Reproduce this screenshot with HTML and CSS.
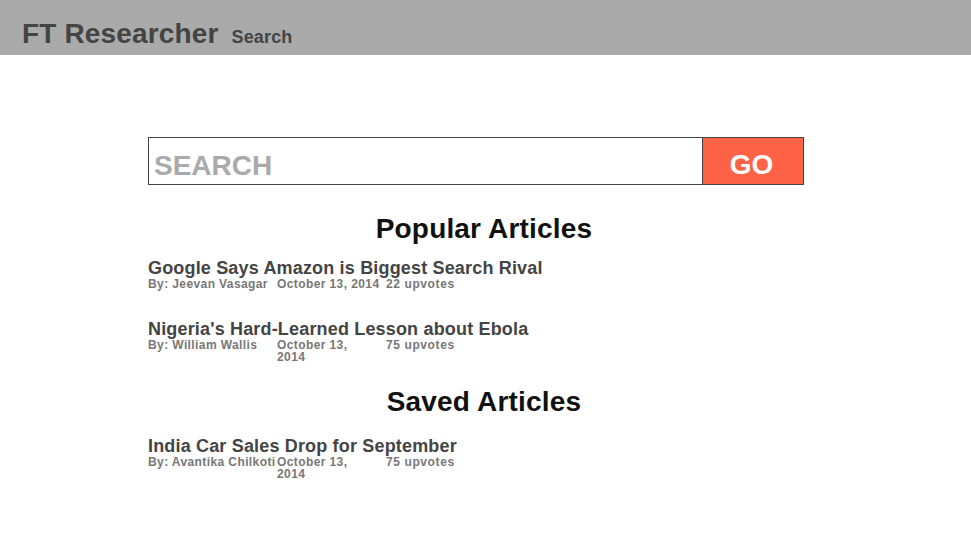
FILE: index.html
```html
<!DOCTYPE html>
<html>
<head>
<meta charset="utf-8">
<title>FT Researcher</title>
<link rel="stylesheet" href="styles.css">
</head>
<body>
<header class="topbar">
  <span class="brand">FT Researcher</span>
  <span class="nav">Search</span>
</header>
<main class="container">
  <form class="search">
    <input class="search-input" type="text" placeholder="SEARCH">
    <button class="search-btn" type="button">GO</button>
  </form>
  <h2 class="section-title popular">Popular Articles</h2>
  <section class="articles">
    <div class="article">
      <div class="title">Google Says Amazon is Biggest Search Rival</div>
      <div class="meta">
        <span class="author">By: Jeevan Vasagar</span>
        <span class="date">October 13, 2014</span>
        <span class="votes">22 upvotes</span>
      </div>
    </div>
    <div class="article">
      <div class="title">Nigeria's Hard-Learned Lesson about Ebola</div>
      <div class="meta wrap">
        <span class="author">By: William Wallis</span>
        <span class="date">October 13, 2014</span>
        <span class="votes">75 upvotes</span>
      </div>
    </div>
  </section>
  <h2 class="section-title saved">Saved Articles</h2>
  <section class="articles">
    <div class="article">
      <div class="title">India Car Sales Drop for September</div>
      <div class="meta wrap">
        <span class="author">By: Avantika Chilkoti</span>
        <span class="date">October 13, 2014</span>
        <span class="votes">75 upvotes</span>
      </div>
    </div>
  </section>
</main>
</body>
</html>
```
FILE: styles.css
```css
html, body {
  margin: 0;
  padding: 0;
  background: #fff;
  font-family: "Liberation Sans", Arial, sans-serif;
}
.topbar {
  height: 55px;
  background: #aaaaaa;
  display: flex;
  align-items: baseline;
  padding: 18px 0 0 22px;
  box-sizing: border-box;
  color: #444;
  font-weight: bold;
  overflow: hidden;
}
.brand {
  font-size: 28px;
  letter-spacing: 0.15px;
}
.nav {
  font-size: 18px;
  margin-left: 13px;
  letter-spacing: 0.15px;
}
.container {
  width: 675px;
  margin: 0 auto;
  padding-top: 82px;
}
.search {
  display: flex;
  width: 656px;
  height: 48px;
  margin: 0;
}
.search-input {
  flex: 1;
  min-width: 0;
  height: 48px;
  box-sizing: border-box;
  border: 1px solid #444;
  border-right: none;
  padding: 10px 0 0 5px;
  margin: 0;
  font-family: "Liberation Sans", Arial, sans-serif;
  font-size: 28px;
  font-weight: bold;
  color: #444;
  outline: none;
}
.search-input::placeholder {
  color: #aaaaaa;
}
.search-btn {
  width: 102px;
  flex: none;
  height: 48px;
  box-sizing: border-box;
  border: 1px solid #444;
  background: #ff6347;
  color: #fff;
  font-family: "Liberation Sans", Arial, sans-serif;
  font-size: 28px;
  font-weight: bold;
  padding: 8px 3px 0 0;
  margin: 0;
}
.section-title {
  text-align: center;
  font-size: 28px;
  font-weight: bold;
  color: #111;
  line-height: 32px;
  letter-spacing: 0.18px;
  padding-right: 3px;
}
.section-title.popular {
  margin: 28px 0 13px;
}
.section-title.saved {
  margin: 23px 0 18px;
}
.articles {
  display: flex;
  flex-direction: column;
  gap: 29px;
}
.title {
  font-size: 18px;
  font-weight: bold;
  color: #444;
  line-height: 20px;
  letter-spacing: 0.17px;
}
.meta {
  display: flex;
  font-size: 12px;
  font-weight: bold;
  color: #777;
  letter-spacing: 0.4px;
  line-height: 12px;
}
.author {
  width: 129px;
  flex: none;
  white-space: nowrap;
}
.date {
  width: 109px;
  flex: none;
}
.meta.wrap .date {
  width: 80px;
  margin-right: 29px;
}
.votes {
  letter-spacing: 0.6px;
}
```
